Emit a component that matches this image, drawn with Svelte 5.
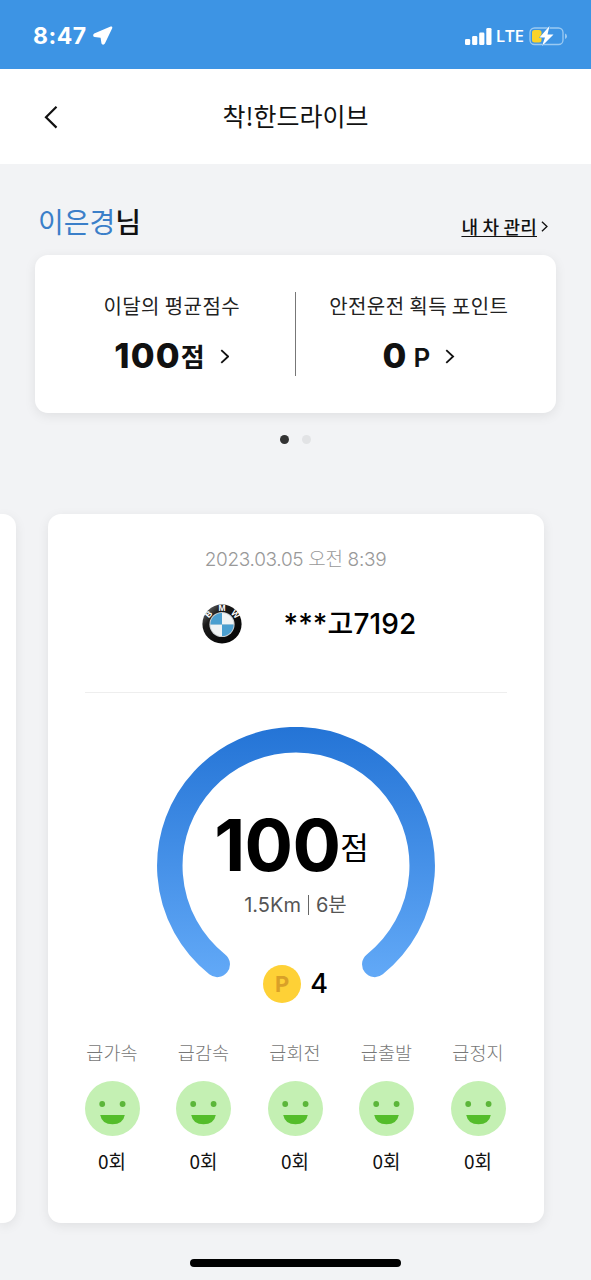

<script lang="ts">
  const trip = {
    date: '2023.03.05 오전 8:39',
    plate: '***고7192',
    score: 100,
    distance: '1.5Km',
    duration: '6분',
    points: 4
  };

  const events = [
    { label: '급가속', count: 0 },
    { label: '급감속', count: 0 },
    { label: '급회전', count: 0 },
    { label: '급출발', count: 0 },
    { label: '급정지', count: 0 }
  ];
</script>

{#snippet chevron(size: number)}
  <svg class="chevron" width={size * 0.64} height={size} viewBox="0 0 9 14" aria-hidden="true">
    <path d="M1.2 1 7.6 7 1.2 13" />
  </svg>
{/snippet}

<div class="screen">
  <div class="status">
    <span class="status__time">8:47</span>
    <svg class="status__loc" width="20" height="20" viewBox="0 0 20 20">
      <path d="M17.6 .6 1.2 7.4C-.3 8.2-.1 10.8 1.6 11L7.6 11.8 8.4 17C8.7 18.9 10.9 19.3 11.9 17.6L19.2 2.2C19.7 1 18.8 .1 17.6 .6Z" />
    </svg>
    <svg class="status__bars" width="27" height="17" viewBox="0 0 27 17">
      <rect x="0" y="11" width="5.2" height="6" rx="1.3" />
      <rect x="7.1" y="8" width="5.2" height="9" rx="1.3" />
      <rect x="14.2" y="4.5" width="5.2" height="12.5" rx="1.3" />
      <rect x="21.3" y="0" width="5.2" height="17" rx="1.3" />
    </svg>
    <span class="status__net">LTE</span>
    <svg class="status__battery" width="39" height="22" viewBox="0 0 39 22">
      <rect class="shell" x="1" y="3" width="33" height="16.5" rx="4.5" />
      <path class="nub" d="M36 8.5Q38 9 38 11.2T36 14Z" />
      <rect class="level" x="3" y="5" width="9.5" height="12.5" rx="2.5" />
      <path class="bolt" d="M20.5 1 10.5 12.5H16L13 21 24.5 9.5H18.5Z" />
    </svg>
  </div>

  <header class="header">
    <svg class="header__back" width="14" height="24" viewBox="0 0 14 24">
      <path d="M12.5 1.8 2 12.2 12.5 22.6" />
    </svg>
    <h1>착!한드라이브</h1>
  </header>

  <div class="user">
    <p class="user__name"><span>이은경</span>님</p>
    <a class="user__link" href="#cars"><span>내 차 관리</span>{@render chevron(11)}</a>
  </div>

  <section class="summary">
    <div class="summary__item">
      <p class="summary__label">이달의 평균점수</p>
      <p class="summary__value"><b>100</b><span class="unit">점</span>{@render chevron(15)}</p>
    </div>
    <div class="summary__item">
      <p class="summary__label">안전운전 획득 포인트</p>
      <p class="summary__value"><b>0</b><span class="unit unit--p">P</span>{@render chevron(15)}</p>
    </div>
  </section>

  <div class="dots"><i class="on"></i><i></i></div>

  <div class="trips">
    <div class="trip trip--prev"></div>
    <article class="trip">
      <p class="trip__date">{trip.date}</p>

      <div class="car">
        <svg class="car__logo" width="40" height="40" viewBox="0 0 40 40">
          <defs>
            <linearGradient id="rim" x1="0" y1="0" x2="1" y2="1">
              <stop offset="0" stop-color="#888" />
              <stop offset=".3" stop-color="#1a1a1a" />
              <stop offset="1" stop-color="#000" />
            </linearGradient>
          </defs>
          <circle cx="20" cy="20" r="19.6" fill="url(#rim)" />
          <circle cx="20" cy="20.5" r="12.6" fill="#c9ced1" />
          <path d="M20 20.5V8.9A11.6 11.6 0 0 1 31.6 20.5ZM20 20.5V32.1A11.6 11.6 0 0 1 8.4 20.5Z" fill="#f1f4f5" />
          <path d="M20 20.5H8.4A11.6 11.6 0 0 1 20 8.9ZM20 20.5H31.6A11.6 11.6 0 0 1 20 32.1Z" fill="#4b9fd0" />
          <text class="car__mark" transform="translate(8.8 12.2) rotate(-48)">B</text>
          <text class="car__mark" transform="translate(20 6.9)">M</text>
          <text class="car__mark" transform="translate(31.2 12.2) rotate(48)">W</text>
        </svg>
        <span class="car__plate">{trip.plate}</span>
      </div>

      <div class="gauge">
        <svg class="gauge__ring" width="278" height="251" viewBox="0 0 278 251">
          <defs>
            <linearGradient id="ring" gradientUnits="userSpaceOnUse" x1="0" y1="0" x2="0" y2="251">
              <stop offset="0" stop-color="#2474d6" />
              <stop offset="1" stop-color="#62a9f7" />
            </linearGradient>
          </defs>
          <path d="M60.2 237.4A126.2 126.2 0 1 1 217.8 237.4" />
        </svg>
        <div class="gauge__body">
          <p class="score"><b>{trip.score}</b><span>점</span></p>
          <p class="distance">{trip.distance}<i></i>{trip.duration}</p>
          <p class="points"><span class="coin">P</span>{trip.points}</p>
        </div>
      </div>

      <ul class="events">
        {#each events as event}
          <li>
            <span class="events__label">{event.label}</span>
            <svg width="55" height="55" viewBox="0 0 55 55">
              <circle cx="27.5" cy="27.5" r="27.5" fill="#c4f0b3" />
              <circle cx="17.2" cy="23" r="2.9" fill="#5cb63a" />
              <circle cx="37.6" cy="23" r="2.9" fill="#5cb63a" />
              <path d="M15.2 34H39.8Q38 43.3 27.5 43.3T15.2 34Z" fill="#54bd2b" />
            </svg>
            <span class="events__count">{event.count}회</span>
          </li>
        {/each}
      </ul>
    </article>
  </div>

  <div class="home"></div>
</div>

<style>
  :global(body) { margin: 0; background: #f2f3f5; }

  .screen {
    width: 591px;
    height: 1280px;
    overflow: hidden;
    display: flex;
    flex-direction: column;
    background: #f2f3f5;
    color: #111;
    font-family: "Noto Sans CJK KR", sans-serif;
  }
  p, h1, ul { margin: 0; padding: 0; }
  svg { display: block; flex: none; }

  .chevron path { fill: none; stroke: #111; stroke-width: 1.7; }

  .status {
    box-sizing: border-box;
    height: 69px;
    flex: none;
    display: flex;
    align-items: center;
    padding: 3px 23px 0 33px;
    background: #3d94e4;
    color: #fff;
  }
  .status__time { font: 700 23px/30px Inter, sans-serif; letter-spacing: 0.5px; }
  .status__loc { margin-left: 6px; fill: #fff; }
  .status__bars { margin-left: auto; fill: #fff; }
  .status__net { margin: 0 5px 1px 4px; font: 600 17px/24px "Open Sans", sans-serif; }
  .shell { fill: none; stroke: #9bcaf2; stroke-width: 1.3; }
  .nub { fill: #9bcaf2; }
  .level { fill: #fbd329; }
  .bolt { fill: #fff; stroke: #3d94e4; stroke-width: 1; paint-order: stroke; }

  .header {
    height: 95px;
    flex: none;
    display: grid;
    grid-template-columns: 100px 1fr 100px;
    align-items: center;
    background: #fff;
  }
  .header__back { margin-left: 44px; }
  .header__back path { fill: none; stroke: #111; stroke-width: 2.2; }
  h1 { margin-top: -3px; font-size: 25px; font-weight: 400; line-height: 36px; text-align: center; }

  .user {
    height: 91px;
    flex: none;
    display: flex;
    justify-content: space-between;
    align-items: flex-start;
    padding: 0 43px 0 38px;
    box-sizing: border-box;
  }
  .user__name { margin-top: 36px; font-size: 28px; line-height: 42px; font-weight: 500; }
  .user__name span { color: #3b7fc9; font-weight: 400; }
  .user__link {
    display: flex;
    align-items: center;
    gap: 4px;
    margin-top: 48px;
    color: #111;
    font-size: 18px;
    font-weight: 500;
    line-height: 28px;
    letter-spacing: 0.2px;
    text-decoration: none;
  }
  .user__link span { text-decoration: underline; text-underline-offset: 2px; }

  .summary {
    height: 158px;
    flex: none;
    margin: 0 35px;
    display: grid;
    grid-template-columns: 1fr 1fr;
    align-items: center;
    border-radius: 13px;
    background: #fff;
    box-shadow: 0 3px 12px rgba(0, 0, 0, 0.08);
  }
  .summary__item { height: 84px; text-align: center; }
  .summary__item:first-child { border-right: 1px solid #777; padding-left: 14px; }
  .summary__item:last-child { padding-right: 14px; }
  .summary__label { font-size: 20px; line-height: 28px; letter-spacing: 0.4px; color: #222; }
  .summary__value { display: flex; justify-content: center; align-items: center; height: 44px; margin-top: 14px; line-height: 44px; }
  .summary__value b { font: 800 34.5px/44px Inter, sans-serif; letter-spacing: 1.2px; }
  .unit { font-size: 26px; font-weight: 700; }
  .unit--p { margin: 3px 0 0 6px; font: 600 26px/44px Inter, sans-serif; }
  .summary__value .chevron { margin-left: 15px; }

  .dots { height: 101px; flex: none; display: flex; justify-content: center; gap: 13px; padding-top: 22px; box-sizing: border-box; }
  .dots i { width: 9px; height: 9px; border-radius: 50%; background: #e2e3e5; }
  .dots .on { background: #333; }

  .trips { display: flex; gap: 31.5px; height: 708.5px; flex: none; }
  .trip {
    box-sizing: border-box;
    width: 496px;
    flex: none;
    display: flex;
    flex-direction: column;
    padding: 32px 37px 0;
    border-radius: 13px;
    background: #fff;
    box-shadow: 0 3px 12px rgba(0, 0, 0, 0.08);
  }
  .trip--prev { width: 16px; padding: 0; border-radius: 0 13px 13px 0; }
  .trip__date { height: 28px; text-align: center; font: 300 19px/28px Inter, "Noto Sans CJK KR", sans-serif; letter-spacing: -0.32px; color: #999; }

  .car {
    height: 119px;
    box-sizing: border-box;
    display: flex;
    align-items: flex-start;
    padding: 30px 0 0 117px;
    border-bottom: 1px solid #eee;
  }
  .car__mark { fill: #fff; font: 700 8.5px "Liberation Sans", sans-serif; text-anchor: middle; }
  .car__plate { margin-left: 42px; font: 500 28px/40px Inter, "Noto Sans CJK KR", sans-serif; letter-spacing: 0.1px; color: #000; }

  .gauge { display: grid; justify-items: center; margin-top: 34px; height: 279px; }
  .gauge__ring, .gauge__body { grid-area: 1 / 1; }
  .gauge__ring path { fill: none; stroke: url(#ring); stroke-width: 25.5; stroke-linecap: round; }
  .gauge__body { display: flex; flex-direction: column; align-items: center; padding-top: 78px; color: #000; }
  .score { display: flex; align-items: center; height: 80px; margin-right: 8px; }
  .score b { font: 700 72px/80px Inter, sans-serif; letter-spacing: -0.7px; }
  .score span { margin-top: 2px; font-size: 31px; line-height: 40px; }
  .distance { display: flex; align-items: center; height: 28px; margin-top: 6px; font: 400 20px/28px Inter, "Noto Sans CJK KR", sans-serif; color: #555; }
  .distance i { width: 1px; height: 20px; margin: 0 7px; background: #666; }
  .points { display: flex; align-items: center; height: 38px; gap: 9px; margin: 46px 0 0; font: 500 27px/40px Inter, sans-serif; }
  .coin { width: 38px; height: 38px; border-radius: 50%; background: #fed136; color: #d9a028; font: 700 22px/38px Inter, sans-serif; text-align: center; }

  .events { display: flex; justify-content: space-between; margin: 32px 1px 0 0; list-style: none; }
  .events li { width: 55px; display: flex; flex-direction: column; align-items: center; white-space: nowrap; }
  .events__label { height: 28px; margin-bottom: 15px; font-size: 18.5px; line-height: 28px; font-weight: 300; letter-spacing: 0.1px; color: #777; }
  .events__count { margin-top: 11px; font-size: 19px; line-height: 28px; color: #111; }

  .home { width: 211px; height: 8px; margin: 36.5px auto 0; border-radius: 4px; background: #000; }
</style>
